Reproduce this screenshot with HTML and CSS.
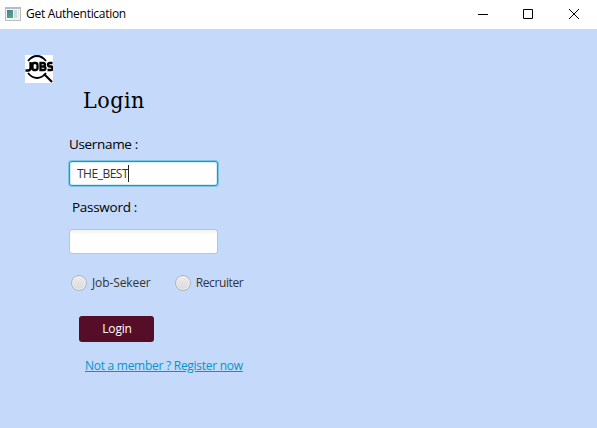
FILE: index.html
```html
<!DOCTYPE html>
<html lang="en">
<head>
<meta charset="utf-8">
<title>Get Authentication</title>
<link rel="stylesheet" href="styles.css">
</head>
<body>
<header class="titlebar">
  <svg class="app-icon" width="16" height="14" viewBox="0 0 16 14">
    <defs><linearGradient id="pane" x2="0.5" y2="1"><stop stop-color="#477caa"/><stop offset="1" stop-color="#55a77a"/></linearGradient></defs>
    <path fill="#b8bcc0" d="M0 0h16v14H0z"/><path fill="#f2f4f5" d="M1 2h14v11H1z"/>
    <path fill="url(#pane)" d="M2 3h6v8H2z"/><path fill="#cddce1" d="M9 3h3v8H9z"/><path fill="#e2e9df" d="M13 3h1v8h-1z"/>
  </svg>
  <span class="window-title">Get Authentication</span>
  <div class="controls">
    <svg width="46" height="28" viewBox="0 0 46 28"><path d="M18 13.500h10"/></svg>
    <svg width="46" height="28" viewBox="0 0 46 28"><path d="M17.500 8.500h9v9h-9z"/></svg>
    <svg width="45" height="28" viewBox="0 0 45 28"><path d="M17 8l10 10M27 8L17 18"/></svg>
  </div>
</header>
<main class="content">
  <svg class="logo" width="28" height="28" viewBox="0 0 28 28">
    <path fill="#fff" d="M0 0h28v28H0z"/>
    <g fill="none" stroke="#000" stroke-width="1.8">
      <path d="M3 6Q7 1 12 1T21 6M3 18Q7 23 12 23T21 18"/><path stroke-width="2.2" d="M19 19l8 8"/>
      <path stroke-width="2.300" d="M5.500 7v6q0 2.500-2.500 2.500H0.500M9 8h1.500q2 0 2 2v3q0 2-2 2H9q-1.500 0-1.500-2v-3q0-2 1.500-2zM15.500 8h2.500q2 0 2 1.800T18 11.500h-2.500zM15.500 11.500h3q2 0 2 1.800T18.500 15h-3zM27.500 8h-2.500q-2 0-2 1.800t2 1.700h1q1.500 0 1.500 1.800T26 15h-3.500"/>
    </g>
  </svg>
  <form class="login">
    <h1 class="heading">Login</h1>
    <label class="label user-label" for="user">Username :</label>
    <div class="field focused" id="user"><span>THE_BEST</span><i class="caret"></i></div>
    <label class="label pass-label" for="pass">Password :</label>
    <div class="field" id="pass"></div>
    <div class="roles">
      <span class="role"><i class="radio"></i><span class="seeker">Job-Sekeer</span></span>
      <span class="role"><i class="radio"></i><span class="recruiter">Recruiter</span></span>
    </div>
    <button class="submit" type="button">Login</button>
    <a class="register" href="#">Not a member ? Register now</a>
  </form>
</main>
</body>
</html>
```
FILE: styles.css
```css
* { box-sizing: border-box; }
body {
  margin: 0;
  width: 597px;
  height: 428px;
  overflow: hidden;
  background: #c5d9fa;
  font: 12px/16px "Open Sans", "Noto Sans", sans-serif;
  color: #333;
}
.titlebar {
  display: flex;
  align-items: center;
  height: 29px;
  padding-left: 5px;
  background: #fff;
  color: #000;
}
.app-icon { margin-right: 5px; margin-bottom: 2px; }
.window-title { margin-bottom: 1px; letter-spacing: -0.29px; white-space: nowrap; }
.controls { display: flex; margin-left: auto; height: 28px; }
.controls path { fill: none; stroke: #000; stroke-width: 1; }
.content { display: flex; align-items: flex-start; padding: 26px 0 0 25px; }
.logo { flex: none; }
.login {
  display: flex;
  flex-direction: column;
  align-items: flex-start;
  margin-left: 16px;
  padding-top: 30px;
}
.heading {
  margin: 0 0 0 14px;
  color: #000;
  font: 400 23px/30px "DejaVu Serif Condensed", "DejaVu Serif", serif;
  letter-spacing: 0.5px;
}
.label { color: #000; font-size: 13.5px; line-height: 20px; white-space: nowrap; }
.user-label { margin-top: 19px; letter-spacing: -0.33px; }
.pass-label { margin: 11px 0 0 3px; letter-spacing: -0.28px; }
.field {
  display: flex;
  align-items: center;
  width: 149px;
  height: 25px;
  padding-left: 7px;
  border: 1px solid #bdc3cc;
  border-radius: 3px;
  background: linear-gradient(#f1f1f1, #fff 5px);
}
.focused {
  margin-top: 7px;
  border-color: #08a0cc;
  background: #fff;
  box-shadow: 0 0 0 1px #7ac5e5, inset 0 0 0 1px #d5edf7;
  letter-spacing: -0.5px;
}
.caret { width: 1px; height: 17px; background: #222; }
#pass { margin-top: 12px; }
.roles { display: flex; gap: 24px; margin: 20px 0 0 2px; }
.role { display: flex; align-items: center; gap: 5px; height: 18px; white-space: nowrap; }
.seeker { letter-spacing: -0.1px; }
.recruiter { letter-spacing: -0.38px; }
.radio {
  width: 16px;
  height: 16px;
  border: 1px solid #b0b5bd;
  border-radius: 50%;
  background: linear-gradient(#ececec, #dadada);
  box-shadow: inset 0 0 0 1px #eee;
}
.submit {
  width: 75px;
  height: 26px;
  margin: 24px 0 0 10px;
  padding: 0 0 0 1px;
  border: 0;
  border-radius: 3px;
  background: #560d28;
  color: #fff;
  font: inherit;
  letter-spacing: -0.2px;
}
.register { margin: 16px 0 0 16px; color: #0096c9; letter-spacing: -0.27px; white-space: nowrap; }
```
